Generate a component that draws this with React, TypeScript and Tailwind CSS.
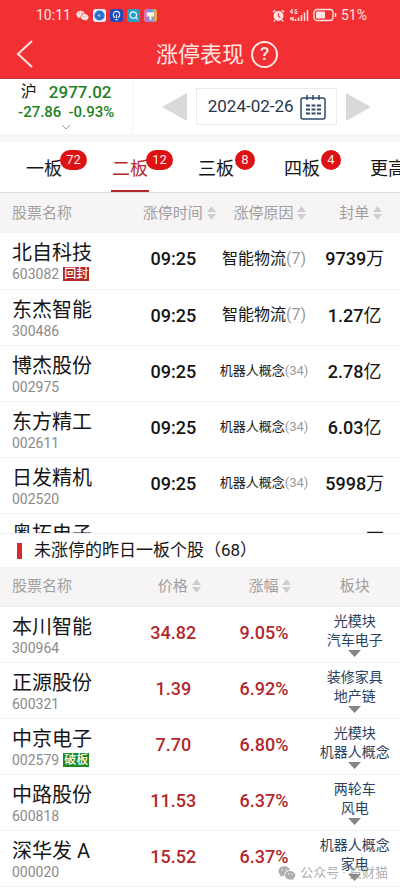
import React from "react";

type Limit = { name: string; code?: string; tag?: string; time: string; reason?: string; count?: number; amount: string; small?: boolean };
type Missed = { name: string; code: string; tag?: string; price: string; change: string; sectors: [string, string] };

const limits: Limit[] = [
  { name: "北自科技", code: "603082", tag: "回封", time: "09:25", reason: "智能物流", count: 7, amount: "9739万" },
  { name: "东杰智能", code: "300486", time: "09:25", reason: "智能物流", count: 7, amount: "1.27亿" },
  { name: "博杰股份", code: "002975", time: "09:25", reason: "机器人概念", count: 34, amount: "2.78亿", small: true },
  { name: "东方精工", code: "002611", time: "09:25", reason: "机器人概念", count: 34, amount: "6.03亿", small: true },
  { name: "日发精机", code: "002520", time: "09:25", reason: "机器人概念", count: 34, amount: "5998万", small: true },
  { name: "奥拓电子", time: "09:30", amount: "5600万" },
];

const missed: Missed[] = [
  { name: "本川智能", code: "300964", price: "34.82", change: "9.05%", sectors: ["光模块", "汽车电子"] },
  { name: "正源股份", code: "600321", price: "1.39", change: "6.92%", sectors: ["装修家具", "地产链"] },
  { name: "中京电子", code: "002579", tag: "破板", price: "7.70", change: "6.80%", sectors: ["光模块", "机器人概念"] },
  { name: "中路股份", code: "600818", price: "11.53", change: "6.37%", sectors: ["两轮车", "风电"] },
  { name: "深华发 A", code: "000020", price: "15.52", change: "6.37%", sectors: ["机器人概念", "家电"] },
];

const tabs = [
  { label: "一板", count: 72 },
  { label: "二板", count: 12, active: true },
  { label: "三板", count: 8 },
  { label: "四板", count: 4 },
  { label: "更高" },
];

function WeChat({ className }: { className: string }) {
  return (
    <svg viewBox="0 0 24 20" className={className} fill="currentColor" aria-hidden="true">
      <path
        fillRule="evenodd"
        d="M8.5 1C4 1 .6 3.9.6 7.5c0 2 1.1 3.8 2.9 5l-.8 2.6 3-1.5c.8.2 1.7.4 2.600.4C8 9.5 11.4 6.4 16.2 6.4 15.6 3.3 12.4 1 8.5 1zM5.8 4.5a1 1 0 1 1 0 2.1 1 1 0 0 1 0-2.1zm5.3 0a1 1 0 1 1 0 2.1 1 1 0 0 1 0-2.1z"
      />
      <path
        fillRule="evenodd"
        d="M16.3 7.3c-4 0-7 2.6-7 5.7s3 5.7 7 5.7c.8 0 1.5-.1 2.2-.3l2.5 1.3-.7-2.2c1.7-1 2.8-2.7 2.8-4.5 0-3.1-3-5.7-6.8-5.7zM14 10.4a.9.9 0 1 1 0 1.8.9.9 0 0 1 0-1.8zm4.6 0a.9.9 0 1 1 0 1.8.9.9 0 0 1 0-1.8z"
      />
    </svg>
  );
}

function StatusBar() {
  return (
    <div className="flex h-[30px] items-center justify-between pr-[33px] pl-9 text-[#ffe4e0]">
      <div className="flex items-center gap-[3px]">
        <span className="mr-[2px] text-[14px] leading-5">10:11</span>
        <WeChat className="h-[11px] w-[13px]" />
        <svg viewBox="0 0 14 14" className="ml-[1px] size-[13px]" aria-hidden="true">
          <rect width="14" height="14" rx="3" fill="#e6eefb" />
          <circle cx="7" cy="7" r="5.5" fill="#2c78d4" />
          <path d="M3.500 7l5-3v6z" fill="#8cc4f5" stroke="#174a9e" strokeWidth=".8" />
        </svg>
        <svg viewBox="0 0 14 14" className="ml-[1px] size-[13px]" aria-hidden="true">
          <rect width="14" height="14" rx="3" fill="#2347b8" />
          <path d="M5.5 9.5C4 8.5 3.5 7.5 3.5 6a3.5 3.5 0 0 1 7 0c0 1.5-.5 2.5-2 3.500M5.7 11.5h2.600M7 6v4" fill="none" stroke="#e4efff" strokeWidth="1.2" />
        </svg>
        <svg viewBox="0 0 14 14" className="ml-[1px] size-[13px]" aria-hidden="true">
          <rect width="14" height="14" rx="3" fill="#2a9fc4" />
          <circle cx="6.8" cy="6.5" r="3.5" fill="none" stroke="#e2faff" strokeWidth="1.3" />
          <path d="M9.3 9l2.2 2.2" stroke="#e2faff" strokeWidth="1.3" />
        </svg>
        <svg viewBox="0 0 14 14" className="ml-[1px] size-[13px]" aria-hidden="true">
          <defs>
            <linearGradient id="rainbow">
              <stop offset="0" stopColor="#ef6fa0" />
              <stop offset=".5" stopColor="#6b8df0" />
              <stop offset="1" stopColor="#f5b52e" />
            </linearGradient>
          </defs>
          <rect width="14" height="14" rx="3" fill="url(#rainbow)" />
          <path d="M3 3.5h8v4.500H8v4H6V8H3z" fill="#fff6e0" />
        </svg>
      </div>
      <div className="flex items-center gap-1">
        <svg viewBox="0 0 14 14" className="size-[13px]" aria-hidden="true">
          <circle cx="7" cy="7.5" r="5.3" fill="currentColor" />
          <path d="M1 3.5L3.5 1M13 3.5L10.5 1M3 12l-1 1.5M11 12l1 1.5" stroke="currentColor" strokeWidth="1.4" />
          <path d="M7 4.5v3.300l2 1.5" stroke="#f23033" strokeWidth="1.2" fill="none" />
        </svg>
        <svg viewBox="0 0 20 14" className="h-[14px] w-[20px]" aria-hidden="true">
          <path d="M3 1L1 4h3M3 1v5M8 1.5H6v4h2v-2H7" stroke="currentColor" strokeWidth=".9" fill="none" />
          <path d="M2 9v3M4 9v4M6.5 11v2M9.5 9.5V13M12.5 7v6M15.5 4.5V13M18.5 2v11" stroke="currentColor" strokeWidth="1.5" />
        </svg>
        <svg viewBox="0 0 24 14" className="h-[14px] w-[24px]" aria-hidden="true">
          <rect x="1" y="1.5" width="19" height="11" rx="3" fill="none" stroke="currentColor" strokeWidth="1.3" />
          <rect x="3" y="3.5" width="9" height="7" rx="1" fill="currentColor" />
          <path d="M22.5 5v4" stroke="currentColor" strokeWidth="1.5" />
        </svg>
        <span className="text-[14px] leading-5">51%</span>
      </div>
    </div>
  );
}

function SortIcon() {
  return (
    <svg viewBox="0 0 9 14" className="h-[14px] w-[9px] shrink-0" fill="#cfcdce" aria-hidden="true">
      <path d="M4.5 0L9 6H0zM4.5 14L9 8H0z" />
    </svg>
  );
}

function HeadCell({ label, sortable = true }: { label: string; sortable?: boolean }) {
  return (
    <th scope="col" className="p-0 font-normal">
      {sortable ? (
        <button type="button" className="flex w-full items-center justify-center gap-1 pl-3 whitespace-nowrap">
          {label}
          <SortIcon />
        </button>
      ) : (
        label
      )}
    </th>
  );
}

function NameCell({ name, code, tag }: { name: string; code?: string; tag?: string }) {
  return (
    <td className="p-0 pt-2 pl-3 text-left align-top whitespace-nowrap">
      <div className="text-[20px] leading-6 text-[#161616]">{name}</div>
      {code && (
        <div className="flex items-center gap-1 text-[14px] leading-[18px] text-[#8b8b8b]">
          {code}
          {tag && (
            <span className={`px-[1px] text-[12px] leading-[14px] font-medium text-white ${tag === "破板" ? "bg-[#1f8a22]" : "bg-[#b02a2c]"}`}>
              {tag}
            </span>
          )}
        </div>
      )}
    </td>
  );
}

const rowStyle = "h-14 border-b border-[#f3f3f3]";

export default function App() {
  return (
    <main className="relative w-full overflow-hidden bg-white font-[Roboto,'Noto_Sans_CJK_SC',sans-serif] text-[#161616]">
      <header className="h-[79px] border-b border-[#b5393b] bg-[#f23033]">
        <StatusBar />
        <div className="grid h-12 grid-cols-[56px_1fr_56px] items-center text-[#ffe4e0]">
          <button type="button" aria-label="返回" className="pl-4">
            <svg viewBox="0 0 18 28" className="h-7 w-[18px]" fill="none" stroke="currentColor" strokeWidth="2" aria-hidden="true">
              <path d="M16 1L2 14l14 13" />
            </svg>
          </button>
          <div className="flex items-center justify-center gap-[7px] pl-[34px]">
            <h1 className="pt-[2px] text-[22px] leading-8 whitespace-nowrap">涨停表现</h1>
            <button type="button" aria-label="帮助" className="flex size-[27px] items-center justify-center rounded-full border-2 border-current text-[19px] font-medium">
              ?
            </button>
          </div>
        </div>
      </header>

      <section className="flex h-[55px] bg-white">
        <button type="button" className="flex w-1/3 flex-col items-center border-r border-[#f3f3f3] pt-[2px] text-[#1d821f]">
          <span className="flex items-center gap-3 text-[17px] leading-[22px] font-medium">
            <span className="text-[16px] font-normal text-[#161616]">沪</span>
            2977.02
          </span>
          <span className="flex gap-[7px] text-[15px] leading-[18px] font-medium">
            <span>-27.86</span>
            <span>-0.93%</span>
          </span>
          <svg viewBox="0 0 10 6" className="mt-[3px] h-[6px] w-[10px]" fill="none" stroke="#9a9a9a" aria-hidden="true">
            <path d="M1 1l4 4 4-4" />
          </svg>
        </button>
        <div className="flex flex-1 items-center justify-center gap-[9px]">
          <button type="button" aria-label="前一日">
            <svg viewBox="0 0 25 28" className="h-7 w-[25px]" fill="#d9d9dc" aria-hidden="true"><path d="M25 0v28L0 14z" /></svg>
          </button>
          <button type="button" className="flex h-[37px] w-[141px] items-center justify-center gap-[6px] border border-[#ebebeb] text-[17px] whitespace-nowrap text-[#27364d]">
            2024-02-26
            <svg viewBox="0 0 26 26" className="size-[26px]" fill="none" stroke="#2e4a6b" aria-hidden="true">
              <rect x="1" y="4" width="24" height="21" rx="2" strokeWidth="1.5" />
              <path d="M7 1v5M13 1v5M19 1v5" strokeWidth="1.5" />
              <path d="M6 11.5h4M11.5 11.5h4M17 11.5h4M6 15.5h4M11.5 15.5h4M17 15.5h4M6 19.5h4M11.5 19.5h4M17 19.5h4" strokeWidth="2.2" />
            </svg>
          </button>
          <button type="button" aria-label="后一日">
            <svg viewBox="0 0 25 28" className="h-7 w-[25px]" fill="#d9d9dc" aria-hidden="true"><path d="M0 0v28l25-14z" /></svg>
          </button>
        </div>
      </section>

      <nav className="flex gap-12 overflow-hidden border-t-8 border-b border-t-[#f7f5f6] border-b-[#dedcdd] pl-[25px]">
        {tabs.map((t) => (
          <button
            key={t.label}
            type="button"
            className={`relative h-[50px] w-[38px] shrink-0 border-b-2 pt-1 text-[18px] whitespace-nowrap ${t.active ? "border-[#b3282b] text-[#b3282b]" : "border-transparent"}`}
          >
            {t.label}
            {t.count && (
              <span className={`absolute top-2 left-[35px] flex h-5 items-center justify-center rounded-full bg-[#dd1215] text-[13px] text-[#ffe9e6] ${t.count > 9 ? "w-[27px]" : "ml-[3px] w-5"}`}>
                {t.count}
              </span>
            )}
          </button>
        ))}
      </nav>

      <div className="h-[340px] overflow-hidden">
        <table className="w-full table-fixed border-collapse text-center">
          <colgroup>
            <col className="w-[32%]" />
            <col />
            <col />
            <col />
          </colgroup>
          <thead>
            <tr className="h-10 bg-[#f7f4f5] text-[15px] text-[#a09e9f]">
              <th scope="col" className="p-0 pl-3 text-left font-normal">股票名称</th>
              <HeadCell label="涨停时间" />
              <HeadCell label="涨停原因" />
              <HeadCell label="封单" />
            </tr>
          </thead>
          <tbody>
            {limits.map((r) => (
              <tr key={r.name} className={rowStyle}>
                <NameCell name={r.name} code={r.code} tag={r.tag} />
                <td className="p-0 pb-1 text-[18px] font-medium">{r.time}</td>
                <td className={`p-0 pb-1 whitespace-nowrap ${r.small ? "text-[13px]" : "text-[16px]"}`}>
                  {r.reason}
                  {r.count && <span className="text-[#9b9b9b]">({r.count})</span>}
                </td>
                <td className="p-0 pb-1 text-[18px] font-medium whitespace-nowrap">
                  {r.amount.slice(0, -1)}
                  <span className="font-normal">{r.amount.slice(-1)}</span>
                </td>
              </tr>
            ))}
          </tbody>
        </table>
      </div>

      <h2 className="flex h-[34px] items-center gap-3 border-t border-[#f0f0f0] bg-white pl-[17px] text-[17px] whitespace-nowrap">
        <span className="h-4 w-[5px] bg-[#d92b2f]" />
        未涨停的昨日一板个股（68）
      </h2>

      <table className="w-full table-fixed border-collapse text-center">
        <colgroup>
          <col className="w-[32%]" />
          <col />
          <col />
          <col />
        </colgroup>
        <thead>
          <tr className="h-[39px] border-b border-[#eeebec] bg-[#f7f4f5] text-[15px] text-[#a09e9f]">
            <th scope="col" className="p-0 pl-3 text-left font-normal">股票名称</th>
            <HeadCell label="价格" />
            <HeadCell label="涨幅" />
            <HeadCell label="板块" sortable={false} />
          </tr>
        </thead>
        <tbody>
          {missed.map((r) => (
            <tr key={r.code} className={rowStyle}>
              <NameCell name={r.name} code={r.code} tag={r.tag} />
              <td className="p-0 pb-1 text-[18px] font-medium text-[#b3282b]">{r.price}</td>
              <td className="p-0 pb-1 text-[18px] font-medium text-[#b3282b]">{r.change}</td>
              <td className="p-0 text-[14px] leading-[19px] whitespace-nowrap text-[#2b3f5e]">
                <div>{r.sectors[0]}</div>
                <div>{r.sectors[1]}</div>
                <svg viewBox="0 0 13 7" className="mx-auto h-[7px] w-[13px]" fill="#868683" aria-hidden="true"><path d="M0 0h13L6.5 7z" /></svg>
              </td>
            </tr>
          ))}
        </tbody>
      </table>
      <div className="h-1" />

      <div className="absolute right-3 bottom-2 flex items-center gap-1 text-[13px] leading-5 text-[#999999]/80">
        <WeChat className="h-4 w-[18px]" />
        公众号 · 投财猫
      </div>
    </main>
  );
}
